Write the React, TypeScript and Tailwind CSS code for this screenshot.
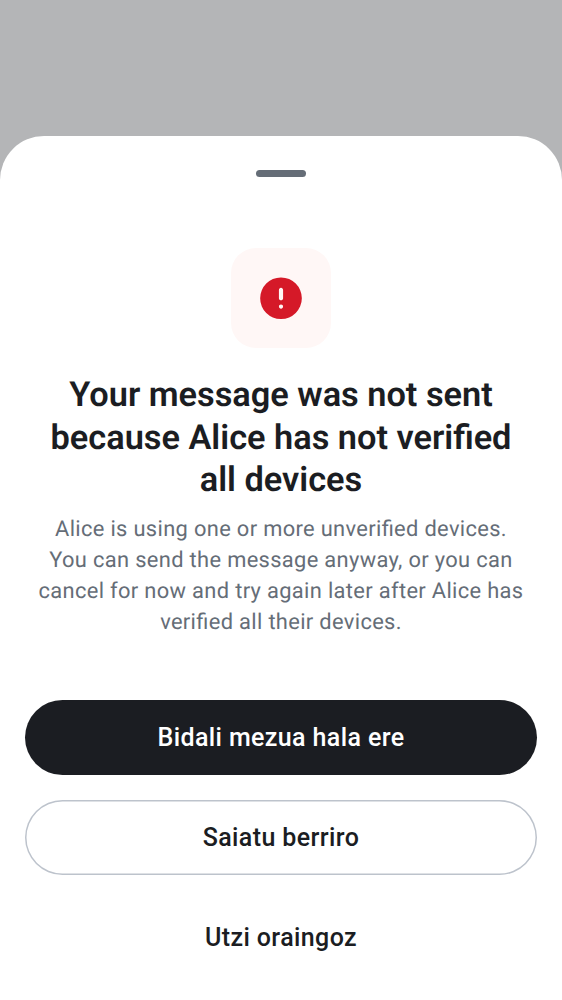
export default function App() {
  return (
    <div className="flex h-[1000px] w-full flex-col overflow-hidden bg-[#b4b5b7] pt-[136px] font-['Roboto',sans-serif] antialiased [text-rendering:geometricPrecision]">
      <main className="flex flex-1 flex-col items-center rounded-t-[44px] bg-white px-[25px] pt-[34px]">
        <div className="h-[7px] w-[50px] rounded-full bg-[#656d77]" />
        <div className="mt-[71px] flex size-[100px] items-center justify-center rounded-[25px] bg-[#fff7f6]">
          <svg className="size-[50px]" viewBox="0 -0.12 24 24" fill="#d51928">
            <path d="M12 17a.97.97 0 0 0 .713-.288A.97.97 0 0 0 13 16a.97.97 0 0 0-.287-.713A.97.97 0 0 0 12 15a.97.97 0 0 0-.713.287A.97.97 0 0 0 11 16q0 .424.287.712.288.288.713.288m0-4q.424 0 .713-.287A.97.97 0 0 0 13 12V8a.97.97 0 0 0-.287-.713A.97.97 0 0 0 12 7a.97.97 0 0 0-.713.287A.97.97 0 0 0 11 8v4q0 .424.287.713.288.287.713.287m0 9a9.7 9.7 0 0 1-3.9-.788 10.1 10.1 0 0 1-3.175-2.137q-1.35-1.35-2.137-3.175A9.7 9.7 0 0 1 2 12q0-2.075.788-3.9a10.1 10.1 0 0 1 2.137-3.175q1.35-1.35 3.175-2.137A9.7 9.7 0 0 1 12 2q2.075 0 3.9.788a10.1 10.1 0 0 1 3.175 2.137q1.35 1.35 2.137 3.175A9.7 9.7 0 0 1 22 12a9.7 9.7 0 0 1-.788 3.9 10.1 10.1 0 0 1-2.137 3.175q-1.35 1.35-3.175 2.137A9.7 9.7 0 0 1 12 22" />
          </svg>
        </div>
        <h1 className="mt-[26px] text-center text-[34.375px] leading-[42.5px] font-semibold tracking-[-0.02px] whitespace-nowrap text-[#1b1d22] [font-feature-settings:'liga'_1]">
          Your message was not sent<br />because Alice has not verified<br />all devices
        </h1>
        <p className="mt-[12.5px] text-center text-[21.875px] leading-[31px] tracking-[0.34px] whitespace-nowrap text-[#656d77] [font-feature-settings:'liga'_1]">
          Alice is using one or more unverified devices.<br />You can send the message anyway, or you can<br />cancel for now and try again later after Alice has<br />verified all their devices.
        </p>
        <div className="mt-[62px] flex w-full flex-col gap-[25px] text-[25px] font-medium tracking-[0.39px] text-[#1b1d22]">
          <button className="h-[75px] rounded-full bg-[#1b1d22] text-white">Bidali mezua hala ere</button>
          <button className="h-[75px] rounded-full shadow-[inset_0_0_0_1.5px_#bdc3cc]">Saiatu berriro</button>
          <button className="h-[75px] rounded-full">Utzi oraingoz</button>
        </div>
      </main>
    </div>
  );
}
